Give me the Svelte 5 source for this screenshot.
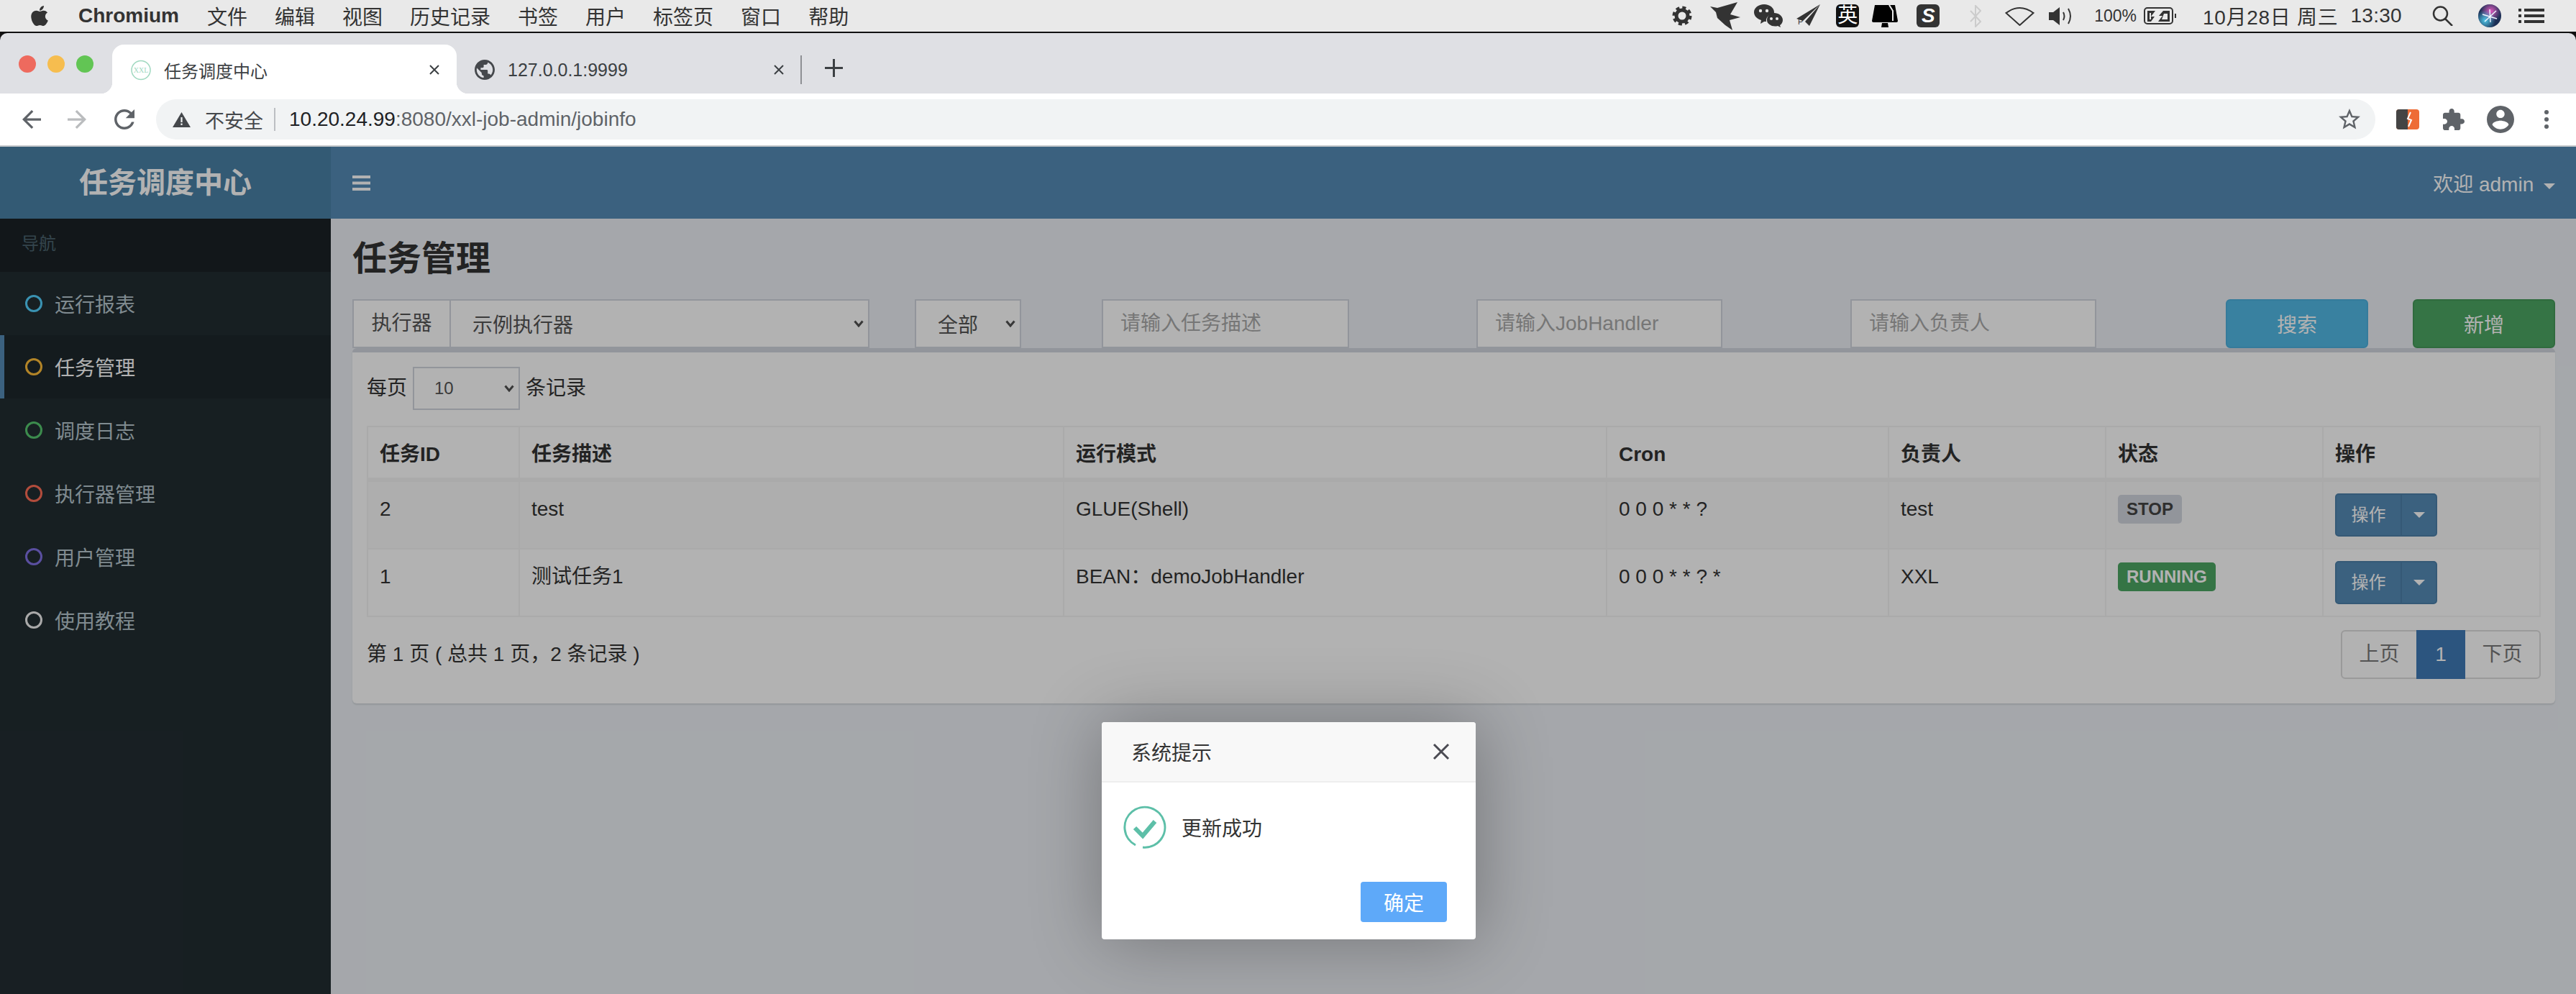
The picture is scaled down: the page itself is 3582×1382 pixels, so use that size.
<script>
  const menus = ['文件', '编辑', '视图', '历史记录', '书签', '用户', '标签页', '窗口', '帮助'];

  const navItems = [
    { label: '运行报表', color: '#53d2ff' },
    { label: '任务管理', color: '#ffbe39', active: true },
    { label: '调度日志', color: '#57c86f' },
    { label: '执行器管理', color: '#ff6e56' },
    { label: '用户管理', color: '#8171e5' },
    { label: '使用教程', color: '#f3f3f3' }
  ];

  const columns = ['任务ID', '任务描述', '运行模式', 'Cron', '负责人', '状态', '操作'];

  const jobs = [
    { id: 2, desc: 'test', mode: 'GLUE(Shell)', cron: '0 0 0 * * ?', owner: 'test', status: 'STOP' },
    { id: 1, desc: '测试任务1', mode: 'BEAN：demoJobHandler', cron: '0 0 0 * * ? *', owner: 'XXL', status: 'RUNNING' }
  ];
</script>

<div class="screen">
  <div class="menubar">
    <svg class="apple" viewBox="0 0 384 512" width="26" height="32"><path fill="#333" d="M318.7 268.7c-.2-36.7 16.4-64.4 50-84.8-18.8-26.9-47.2-41.7-84.7-44.6-35.5-2.8-74.3 20.7-88.5 20.7-15 0-49.4-19.7-76.4-19.7C63.3 141.2 4 184.8 4 273.5q0 39.3 14.4 81.2c12.8 36.7 59 126.7 107.2 125.2 25.2-.6 43-17.9 75.8-17.9 31.8 0 48.3 17.9 76.4 17.9 48.6-.7 90.4-82.5 102.6-119.3-65.2-30.7-61.7-90-61.7-91.9zm-56.6-164.2c27.3-32.4 24.8-61.9 24-72.5-24.1 1.4-52 16.4-67.9 34.9-17.5 19.8-27.8 44.3-25.6 71.9 26.1 2 49.9-11.4 69.5-34.3z"/></svg>
    <strong class="appname">Chromium</strong>
    <div class="menus">
      {#each menus as m}<span>{m}</span>{/each}
    </div>

    <div class="status">
      <svg class="s-gear" width="28" height="30" viewBox="0 0 28 30"><circle cx="14" cy="15" r="8" fill="none" stroke="#333" stroke-width="5"/><circle cx="14" cy="15" r="11.5" fill="none" stroke="#333" stroke-width="4" stroke-dasharray="5 4.03"/></svg>
      <svg class="s-bird" width="43" height="39" viewBox="0 0 43 39"><path fill="#333" d="M0 6l10 2L38 0 28 17l14 4-15 4 4 14-10-7-11-10-2-8z"/></svg>
      <svg class="s-chat" width="40" height="32" viewBox="0 0 40 32"><path fill="#333" d="M14 0c8 0 14 5 14 11 0 1 0 2-1 3-6 0-11 4-10 10h-3l-5 3 1-5C4 20 0 16 0 11 0 5 6 0 14 0z"/><path fill="#333" d="M28 12c6 0 12 4 12 10 0 3-2 6-4 7l1 3-4-2c-7 2-15-2-15-8 0-6 5-10 10-10z"/><circle cx="24" cy="20" r="2" fill="#e9e9e9"/><circle cx="32" cy="20" r="2" fill="#e9e9e9"/><circle cx="9" cy="9" r="2.2" fill="#e9e9e9"/><circle cx="18" cy="9" r="2.2" fill="#e9e9e9"/></svg>
      <svg class="s-plane" width="33" height="32" viewBox="0 0 33 32"><path fill="#333" d="M33 0L0 20l9 3zM33 0L12 24l6 6z"/><text x="2" y="28" font-size="11" fill="#333" font-family="Liberation Sans">P</text></svg>
      <span class="s-ying">英</span>
      <svg class="s-lamp" width="36" height="31" viewBox="0 0 36 31"><path fill="#000" d="M4 0h28l4 22q0 2-2 2H2q-2 0-2-2zM14 25h8l1 6H13z"/><path stroke="#e9e9e9" stroke-width="2" fill="none" d="M24 0l5 8v14"/></svg>
      <span class="s-sogou">S</span>
      <svg class="s-bt" width="16" height="31" viewBox="0 0 16 31"><path fill="none" stroke="#ccc" stroke-width="2" d="M1 8l14 15-7 7V1l7 7L1 23"/></svg>
      <svg class="s-wifi" width="41" height="27" viewBox="0 0 41 27"><path fill="none" stroke="#333" stroke-width="2" d="M1.5 9Q20.5-5 39.5 9L20.500 26z"/></svg>
      <svg class="s-vol" width="33" height="25" viewBox="0 0 33 25"><path fill="#333" d="M0 7h6l9-7v25l-9-7H0z"/><path fill="none" stroke="#333" stroke-width="2" d="M20 7q3 5.500 0 11M27 2q6 10.500 0 21"/></svg>
      <span class="s-pct">100%</span>
      <svg class="s-batt" width="46" height="24" viewBox="0 0 46 24"><rect x="1" y="1" width="39" height="22" rx="4" fill="none" stroke="#333" stroke-width="2"/><path fill="#333" d="M5 5h11l-6 8h5l-5 7H5zM20 20l6-8h-5l6-7h9v15zM43 9h2v6h-2z"/><path fill="#e9e9e9" d="M8 8h2v9H8zM28 9h5v8h-8z"/></svg>
      <span class="s-date">10月28日 周三</span>
      <span class="s-time">13:30</span>
      <svg class="s-search" width="29" height="28" viewBox="0 0 29 28"><circle cx="11.500" cy="11" r="9.500" fill="none" stroke="#333" stroke-width="2.500"/><path d="M18 18l10 10" stroke="#333" stroke-width="2.500"/></svg>
      <svg class="s-siri" width="32" height="32" viewBox="0 0 32 32">
        <defs>
          <radialGradient id="siri-pink" cx="55%" cy="30%" r="45%">
            <stop offset="0" stop-color="#e05bc0"/>
            <stop offset="1" stop-color="#e05bc0" stop-opacity="0"/>
          </radialGradient>
          <radialGradient id="siri-cyan" cx="30%" cy="70%" r="45%">
            <stop offset="0" stop-color="#4fc7e8"/>
            <stop offset="1" stop-color="#4fc7e8" stop-opacity="0"/>
          </radialGradient>
        </defs>
        <circle cx="16" cy="16" r="16" fill="#1c2f55"/>
        <circle cx="16" cy="16" r="16" fill="url(#siri-pink)"/>
        <circle cx="16" cy="16" r="16" fill="url(#siri-cyan)"/>
        <path d="M16 7l1 18M6 14l20 6M25 9L9 24" stroke="#eef6ff" stroke-width="1.500"/>
      </svg>
      <svg class="s-list" width="36" height="20" viewBox="0 0 36 20"><path fill="#333" d="M0 0h4v4H0zM8 0h28v4H8zM0 8h4v4H0zM8 8h28v4H8zM0 16h4v4H0zM8 16h28v4H8z"/></svg>
    </div>
  </div>

  <div class="window">
    <div class="tabstrip">
      <div class="lights"><i class="red"></i><i class="yellow"></i><i class="green"></i></div>
      <div class="tab active">
        <svg class="favicon" width="28" height="29" viewBox="0 0 28 29"><circle cx="14" cy="14.500" r="13" fill="#fff" stroke="#9fd8bf" stroke-width="1.500"/><text x="14" y="18" text-anchor="middle" font-size="10" fill="#9fd8bf" font-family="Liberation Serif">XXL</text></svg>
        <span class="tab-title">任务调度中心</span>
        <svg class="tab-x" width="16" height="16" viewBox="0 0 16 16"><path d="M2 2l12 12M14 2L2 14" stroke="#3c4043" stroke-width="2"/></svg>
      </div>
      <div class="tab">
        <svg class="globe" width="28" height="28" viewBox="2 2 20 20"><path fill="#45484c" d="M12 2C6.480 2 2 6.480 2 12s4.480 10 10 10 10-4.480 10-10S17.520 2 12 2zm-1 17.930c-3.950-.490-7-3.850-7-7.930 0-.620.080-1.210.210-1.790L9 15v1c0 1.100.900 2 2 2v1.930zm6.900-2.540c-.260-.810-1-1.390-1.900-1.390h-1v-3c0-.550-.450-1-1-1H8v-2h2c.550 0 1-.450 1-1V7h2c1.100 0 2-.900 2-2v-.410c2.930 1.190 5 4.060 5 7.410 0 2.080-.800 3.970-2.100 5.390z"/></svg>
        <span class="tab-title">127.0.0.1:9999</span>
        <svg class="tab-x" width="16" height="16" viewBox="0 0 16 16"><path d="M2 2l12 12M14 2L2 14" stroke="#3c4043" stroke-width="2"/></svg>
      </div>
      <span class="tab-sep"></span>
      <svg class="newtab" width="25" height="25" viewBox="0 0 25 25"><path d="M12.500 0v25M0 12.500h25" stroke="#3c4043" stroke-width="3"/></svg>
    </div>

    <div class="toolbar">
      <svg class="nav-back" width="26" height="26" viewBox="4 4 16 16"><path fill="#5f6368" d="M20 11H7.830l5.590-5.590L12 4l-8 8 8 8 1.410-1.410L7.830 13H20v-2z"/></svg>
      <svg class="nav-fwd" width="26" height="26" viewBox="4 4 16 16"><path fill="#babcbe" d="M4 11h12.170l-5.590-5.590L12 4l8 8-8 8-1.410-1.410L16.170 13H4v-2z"/></svg>
      <svg class="nav-reload" width="28" height="28" viewBox="4 4 16 16"><path fill="#5f6368" d="M17.650 6.350C16.200 4.900 14.210 4 12 4c-4.420 0-7.990 3.580-7.990 8s3.570 8 7.990 8c3.730 0 6.840-2.550 7.730-6h-2.080c-.820 2.330-3.040 4-5.650 4-3.310 0-6-2.690-6-6s2.690-6 6-6c1.660 0 3.140.690 4.220 1.780L13 11h7V4l-2.350 2.350z"/></svg>
      <div class="omnibox">
        <svg class="warn" width="25" height="21" viewBox="0 0 25 21"><path fill="#45484c" d="M12.500 0L25 21H0z"/><path d="M11.400 7h2.200v7h-2.200zM11.400 15.500h2.200v2.500h-2.200z" fill="#f1f3f4"/></svg>
        <span class="insecure">不安全</span>
        <span class="omni-sep"></span>
        <span class="url"><b>10.20.24.99</b>:8080/xxl-job-admin/jobinfo</span>
        <svg class="star" width="30" height="30" viewBox="2 2 20 20"><path fill="#5f6368" d="M22 9.240l-7.190-.620L12 2 9.190 8.630 2 9.240l5.460 4.730L5.820 21 12 17.270 18.180 21l-1.630-7.030L22 9.240zM12 15.400l-3.760 2.270 1-4.280-3.320-2.880 4.380-.380L12 6.100l1.710 4.040 4.380.380-3.320 2.880 1 4.280L12 15.400z"/></svg>
      </div>
      <svg class="ext-orange" width="32" height="28" viewBox="0 0 32 28"><rect width="32" height="28" rx="4" fill="#ee6c36"/><path d="M4 0h12v28H4q-4 0-4-4V4q0-4 4-4z" fill="#444"/><path d="M20 4l-4 9 5 2-4 9" fill="none" stroke="#fff" stroke-width="2"/></svg>
      <svg class="ext-puzzle" width="30" height="30" viewBox="2 1 21 21"><path fill="#5f6368" d="M20.500 11H19V7c0-1.100-.900-2-2-2h-4V3.500C13 2.120 11.880 1 10.500 1S8 2.120 8 3.500V5H4c-1.100 0-1.990.900-1.990 2v3.800H3.500c1.490 0 2.700 1.210 2.700 2.700s-1.210 2.700-2.700 2.700H2V20c0 1.100.900 2 2 2h3.800v-1.500c0-1.490 1.210-2.700 2.700-2.700 1.490 0 2.700 1.210 2.700 2.700V22H17c1.100 0 2-.900 2-2v-4h1.500c1.380 0 2.500-1.120 2.500-2.500S21.880 11 20.500 11z"/></svg>
      <svg class="ext-user" width="38" height="38" viewBox="2 2 20 20"><path fill="#5f6368" d="M12 2C6.480 2 2 6.480 2 12s4.480 10 10 10 10-4.480 10-10S17.520 2 12 2zm0 3c1.660 0 3 1.340 3 3s-1.340 3-3 3-3-1.340-3-3 1.340-3 3-3zm0 14.200c-2.500 0-4.710-1.280-6-3.220.030-1.990 4-3.080 6-3.080 1.990 0 5.970 1.090 6 3.080-1.290 1.940-3.500 3.220-6 3.220z"/></svg>
      <svg class="ext-more" width="6" height="26" viewBox="0 0 6 26"><circle cx="3" cy="3" r="3" fill="#5f6368"/><circle cx="3" cy="13" r="3" fill="#5f6368"/><circle cx="3" cy="23" r="3" fill="#5f6368"/></svg>
    </div>
  </div>

  <div class="page">
    <aside class="sidebar">
      <div class="logo">任务调度中心</div>
      <div class="nav-header">导航</div>
      {#each navItems as item}
        <div class="nav-item" class:active={item.active}>
          <svg width="24" height="24" viewBox="0 0 24 24"><circle cx="12" cy="12" r="10.500" fill="none" stroke={item.color} stroke-width="3"/></svg>
          <span>{item.label}</span>
        </div>
      {/each}
    </aside>

    <main class="main">
      <header class="topbar">
        <svg class="hamburger" width="25" height="21" viewBox="0 0 25 21"><path fill="#fff" d="M0 0h25v4H0zM0 8.500h25v4H0zM0 17h25v4H0z"/></svg>
        <div class="user">欢迎 admin <i class="caret"></i></div>
      </header>

      <div class="content">
        <h1>任务管理</h1>

        <div class="filters">
          <div class="group">
            <span class="addon">执行器</span>
            <div class="select grow"><span>示例执行器</span>
              <svg width="14" height="10" viewBox="0 0 14 10"><path d="M1.500 1.500L7 8l5.500-6.500" fill="none" stroke="#333" stroke-width="3"/></svg>
            </div>
          </div>
          <div class="select status-sel"><span>全部</span>
            <svg width="14" height="10" viewBox="0 0 14 10"><path d="M1.500 1.500L7 8l5.500-6.500" fill="none" stroke="#333" stroke-width="3"/></svg>
          </div>
          <input class="f-desc" placeholder="请输入任务描述" />
          <input class="f-handler" placeholder="请输入JobHandler" />
          <input class="f-owner" placeholder="请输入负责人" />
          <button class="btn search">搜索</button>
          <button class="btn add">新增</button>
        </div>

        <section class="box">
          <div class="length">
            <span class="length-text">每页</span>
            <div class="select small"><span>10</span>
              <svg width="14" height="10" viewBox="0 0 14 10"><path d="M1.500 1.500L7 8l5.500-6.500" fill="none" stroke="#333" stroke-width="3"/></svg>
            </div>
            <span class="length-text">条记录</span>
          </div>

          <table>
            <colgroup>
              <col style="width:211px" /><col style="width:757px" /><col style="width:755px" /><col style="width:392px" /><col style="width:302px" /><col style="width:302px" /><col />
            </colgroup>
            <thead>
              <tr>{#each columns as c}<th>{c}</th>{/each}</tr>
            </thead>
            <tbody>
              {#each jobs as job}
                <tr>
                  <td>{job.id}</td>
                  <td>{job.desc}</td>
                  <td>{job.mode}</td>
                  <td>{job.cron}</td>
                  <td>{job.owner}</td>
                  <td><span class="label" class:running={job.status === 'RUNNING'}>{job.status}</span></td>
                  <td>
                    <div class="split">
                      <span class="split-main">操作</span>
                      <span class="split-arrow"><i class="caret"></i></span>
                    </div>
                  </td>
                </tr>
              {/each}
            </tbody>
          </table>

          <div class="foot">
            <span class="info">第 1 页 ( 总共 1 页，2 条记录 )</span>
            <div class="pager">
              <span>上页</span>
              <span class="current">1</span>
              <span>下页</span>
            </div>
          </div>
        </section>
      </div>
    </main>

    <div class="shade">
      <div class="dialog">
        <div class="dialog-title">
          <span>系统提示</span>
          <svg width="24" height="24" viewBox="0 0 24 24"><path d="M2 2l20 20M22 2L2 22" stroke="#4a4a52" stroke-width="3"/></svg>
        </div>
        <div class="dialog-body">
          <svg width="60" height="60" viewBox="0 0 60 60"><path d="M17 55A28 28 0 1 1 27 58" fill="none" stroke="#5dbfa8" stroke-width="3"/><path d="M16 31l11 11 17-20" fill="none" stroke="#5dbfa8" stroke-width="6"/></svg>
          <span>更新成功</span>
        </div>
        <div class="dialog-foot"><button>确定</button></div>
      </div>
    </div>
  </div>
</div>

<style>
  :global(body) {
    margin: 0;
    background: #ecf0f5;
  }

  .screen {
    width: 3582px;
    height: 1382px;
    display: flex;
    flex-direction: column;
    overflow: hidden;
    font-family: "Liberation Sans", "Noto Sans CJK SC", sans-serif;
    font-size: 28px;
    color: #333;
    background: #111;
  }

  /* mac menu bar */
  .menubar {
    height: 44px;
    flex: none;
    background: #e9e9e9;
    display: flex;
    align-items: center;
    padding: 0 44px 0 42px;
    color: #333;
    font-size: 28px;
  }

  .appname {
    margin-left: 41px;
    font-weight: 700;
  }

  .menus {
    display: flex;
    gap: 38px;
    margin-left: 39px;
  }

  .status {
    margin-left: auto;
    display: flex;
    align-items: center;
  }

  .s-bird { margin-left: 25px; }
  .s-chat { margin-left: 18px; }
  .s-plane { margin-left: 19px; }
  .s-ying {
    margin-left: 22px;
    width: 32px;
    height: 32px;
    background: #111;
    color: #fff;
    border-radius: 6px;
    font-size: 28px;
    line-height: 32px;
    text-align: center;
  }
  .s-lamp { margin-left: 18px; }
  .s-sogou {
    margin-left: 26px;
    width: 32px;
    height: 32px;
    background: #333;
    color: #fff;
    border-radius: 6px;
    font-weight: 700;
    font-style: italic;
    font-size: 28px;
    line-height: 32px;
    text-align: center;
  }
  .s-bt { margin-left: 42px; }
  .s-wifi { margin-left: 33px; }
  .s-vol { margin-left: 20px; }
  .s-pct { margin-left: 30px; font-size: 23px; }
  .s-batt { margin-left: 10px; }
  .s-date { margin-left: 36px; letter-spacing: 0.7px; }
  .s-time { margin-left: 17px; letter-spacing: 0.3px; }
  .s-search { margin-left: 42px; }
  .s-siri { margin-left: 35px; }
  .s-list { margin-left: 24px; }

  /* browser chrome */
  .window {
    flex: none;
    margin-top: 2px;
    height: 156px;
    border-bottom: 2px solid #c5c8cb;
    box-sizing: content-box;
  }

  .tabstrip {
    height: 84px;
    background: #dfe0e4;
    border-radius: 10px 10px 0 0;
    display: flex;
    align-items: flex-end;
    color: #3c4043;
    font-size: 24px;
  }

  .lights {
    display: flex;
    gap: 16px;
    align-self: flex-start;
    margin: 31px 0 0 26px;
    width: 130px;
  }

  .lights i {
    width: 24px;
    height: 24px;
    border-radius: 50%;
  }
  .red { background: #ee6a5e; }
  .yellow { background: #f6bd4f; }
  .green { background: #62c554; }

  .tab {
    position: relative;
    width: 479px;
    height: 68px;
    box-sizing: border-box;
    display: flex;
    align-items: center;
    padding: 2px 23px 0 26px;
    border-radius: 16px 16px 0 0;
  }

  .tab.active {
    background: #fff;
  }

  .tab.active::before,
  .tab.active::after {
    content: "";
    position: absolute;
    bottom: 0;
    width: 16px;
    height: 16px;
  }
  .tab.active::before {
    left: -16px;
    background: radial-gradient(circle at 0 0, transparent 16px, #fff 16.500px);
  }
  .tab.active::after {
    right: -16px;
    background: radial-gradient(circle at 100% 0, transparent 16px, #fff 16.500px);
  }

  .tab:not(.active) {
    padding-left: 25px;
    padding-right: 23px;
  }

  .tab-title {
    margin-left: 18px;
    flex: 1;
    white-space: nowrap;
  }

  .tab:not(.active) .tab-title {
    font-size: 25px;
  }

  .tab-sep {
    width: 2px;
    height: 40px;
    background: #8e9094;
    margin: 0 0 13px -1px;
  }

  .newtab {
    margin: 0 0 23px 32px;
  }

  .toolbar {
    height: 72px;
    background: #fff;
    display: flex;
    align-items: center;
  }

  .nav-back { margin-left: 31px; }
  .nav-fwd { margin-left: 37px; }
  .nav-reload { margin-left: 39px; }

  .omnibox {
    margin-left: 30px;
    width: 3086px;
    height: 56px;
    border-radius: 28px;
    background: #f1f3f4;
    display: flex;
    align-items: center;
    box-sizing: border-box;
    padding: 0 21px 0 23px;
    color: #5f6368;
  }

  .insecure {
    margin-left: 20px;
    font-size: 27px;
    color: #45484c;
  }

  .omni-sep {
    width: 2px;
    height: 32px;
    background: #bcbfc3;
    margin: 0 19px 0 15px;
  }

  .url b {
    font-weight: 400;
    color: #202124;
  }

  .star { margin-left: auto; }
  .ext-orange { margin-left: 29px; }
  .ext-puzzle { margin-left: 33px; }
  .ext-user { margin-left: 31px; }
  .ext-more { margin-left: 42px; }

  /* admin page */
  .page {
    position: relative;
    flex: 1;
    min-height: 0;
    display: flex;
    background: #ecf0f5;
  }

  .sidebar {
    width: 460px;
    flex: none;
    background: #222d32;
  }

  .logo {
    height: 100px;
    background: #4a81a7;
    color: #fff;
    font-size: 40px;
    font-weight: 700;
    line-height: 100px;
    text-align: center;
  }

  .nav-header {
    height: 74px;
    line-height: 70px;
    padding-left: 30px;
    background: #1a2226;
    color: #4b646f;
    font-size: 24px;
  }

  .nav-item {
    height: 88px;
    display: flex;
    align-items: center;
    gap: 17px;
    padding-left: 35px;
    color: #b8c7ce;
  }

  .nav-item.active {
    background: #1e282c;
    color: #fff;
    padding-left: 29px;
    border-left: 6px solid #558bb7;
  }

  .main {
    flex: 1;
    min-width: 0;
  }

  .topbar {
    height: 100px;
    background: #558bb7;
    display: flex;
    align-items: center;
    justify-content: space-between;
    padding: 0 29px 0 30px;
    color: #fff;
  }

  .caret {
    display: inline-block;
    width: 0;
    height: 0;
    border-top: 8px solid currentColor;
    border-left: 8px solid transparent;
    border-right: 8px solid transparent;
    vertical-align: middle;
    margin-left: 6px;
  }

  .content {
    padding: 0 29px 0 30px;
  }

  h1 {
    margin: 0;
    padding: 30px 0;
    font-size: 48px;
    line-height: 52px;
    font-weight: 700;
  }

  .filters {
    display: flex;
    height: 68px;
  }

  .group {
    display: flex;
    width: 719px;
  }

  .addon {
    width: 135px;
    box-sizing: border-box;
    background: #fff;
    border: 2px solid #d2d6de;
    color: #555;
    line-height: 64px;
    text-align: center;
    border-right: 0;
  }

  .select {
    box-sizing: border-box;
    background: #fff;
    border: 2px solid #d2d6de;
    color: #555;
    display: flex;
    align-items: center;
    justify-content: space-between;
    padding: 0 6px 0 30px;
    height: 100%;
  }

  .select svg {
    opacity: 0.85;
  }

  .grow {
    flex: 1;
  }

  .status-sel {
    width: 148px;
    margin-left: 63px;
  }

  .filters input {
    box-sizing: border-box;
    background: #fff;
    border: 2px solid #d2d6de;
    padding: 0 24px;
    font: inherit;
    color: #555;
    outline: none;
  }

  .filters input::placeholder {
    color: #aaa;
  }

  .f-desc { width: 344px; margin-left: 112px; }
  .f-handler { width: 342px; margin-left: 177px; }
  .f-owner { width: 342px; margin-left: 178px; }

  .btn {
    width: 198px;
    box-sizing: border-box;
    font: inherit;
    color: #fff;
    border-radius: 6px;
    border: 2px solid transparent;
  }

  .search {
    margin-left: 180px;
    background: #52b9e6;
    border-color: #4cb1de;
  }

  .add {
    margin-left: 62px;
    background: #4ca663;
    border-color: #459a5a;
  }

  .box {
    background: #fff;
    border-top: 6px solid #d2d6de;
    border-radius: 6px;
    padding: 20px;
    box-shadow: 0 2px 2px rgba(0, 0, 0, 0.1);
  }

  .length {
    display: flex;
    align-items: center;
    gap: 8px;
    height: 60px;
    margin-bottom: 22px;
  }

  .length-text {
    padding-bottom: 6px;
  }

  .select.small {
    width: 149px;
    padding-left: 28px;
    font-size: 24px;
  }

  table {
    width: 3023px;
    table-layout: fixed;
    border-collapse: collapse;
  }

  th, td {
    border: 2px solid #f4f4f4;
    padding: 18px 16px 16px;
    line-height: 40px;
    text-align: left;
    vertical-align: top;
    color: #333;
  }

  th {
    border-bottom-width: 6px;
    font-weight: 700;
    padding-bottom: 12px;
  }

  tbody tr:nth-child(odd) {
    background: #f9f9f9;
  }

  .label {
    display: inline-block;
    font-size: 24px;
    font-weight: 700;
    line-height: 40px;
    height: 40px;
    padding: 0 12px;
    border-radius: 5px;
    background: #d2d6de;
    color: #444;
    vertical-align: top;
  }

  .label.running {
    background: #4ca663;
    color: #fff;
  }

  .split {
    display: flex;
    width: 142px;
    height: 60px;
    margin-top: -2px;
    color: #fff;
    font-size: 24px;
    line-height: 60px;
    text-align: center;
    background: #558bb7;
    border-radius: 5px;
    border: 2px solid #4c80aa;
    box-sizing: border-box;
  }

  .split-main {
    width: 89px;
    border-right: 2px solid #4c80aa;
    line-height: 56px;
  }

  .split-arrow {
    flex: 1;
    line-height: 52px;
  }

  .split-arrow .caret {
    margin: 0;
  }

  .foot {
    display: flex;
    justify-content: space-between;
    align-items: center;
    margin: 18px 0 14px;
  }

  .info {
    margin-top: -6px;
  }

  .pager {
    display: flex;
    height: 68px;
    box-sizing: border-box;
    border: 2px solid #ddd;
    border-radius: 6px;
    color: #777;
    line-height: 64px;
    background: #fff;
  }

  .pager span {
    width: 103px;
    text-align: center;
  }

  .pager .current {
    width: 68px;
    background: #3f7ab7;
    color: #fff;
    margin: -2px 0;
    line-height: 68px;
  }

  /* dialog over the dimmed page */
  .shade {
    position: absolute;
    inset: 0;
    background: rgba(0, 0, 0, 0.3);
    display: flex;
    justify-content: center;
    align-items: flex-start;
    padding-top: 800px;
    padding-left: 2px;
  }

  .dialog {
    width: 520px;
    height: 302px;
    background: #fff;
    border-radius: 4px;
    box-shadow: 2px 2px 100px rgba(0, 0, 0, 0.3);
  }

  .dialog-title {
    height: 82px;
    box-sizing: content-box;
    background: #f8f8f8;
    border-bottom: 2px solid #eee;
    border-radius: 4px 4px 0 0;
    display: flex;
    align-items: center;
    justify-content: space-between;
    padding: 0 36px 0 41px;
  }

  .dialog-body {
    display: flex;
    align-items: center;
    gap: 21px;
    padding: 32px 30px 0;
  }

  .dialog-foot {
    display: flex;
    justify-content: flex-end;
    padding: 46px 40px 0 0;
  }

  .dialog-foot button {
    width: 120px;
    height: 56px;
    border: 0;
    border-radius: 4px;
    background: #5ea9f9;
    color: #fff;
    font: inherit;
  }
</style>
